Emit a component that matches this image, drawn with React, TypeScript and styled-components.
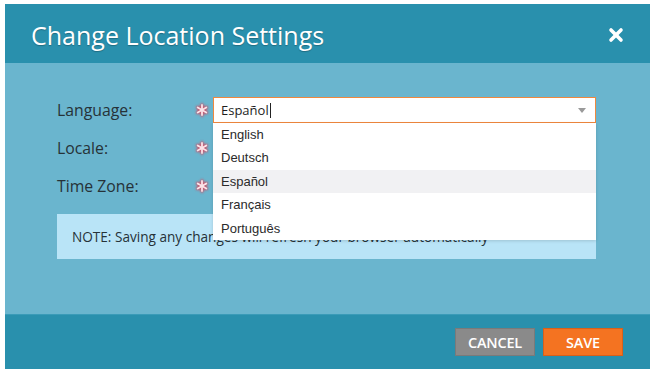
import React from "react";
import styled, { createGlobalStyle } from "styled-components";

const Global = createGlobalStyle`
  html, body { margin: 0; padding: 0; background: #ffffff; }
  body { font-family: "Open Sans", "Liberation Sans", sans-serif; }
  * { box-sizing: border-box; }
`;

const Dialog = styled.div`
  margin: 4px 0 0 5px;
  width: 645px;
  height: 365px;
  display: flex;
  flex-direction: column;
  background: #6ab5ce;
`;

const Header = styled.div`
  height: 59px;
  flex: none;
  background: #2990ad;
  display: flex;
  align-items: center;
  justify-content: space-between;
  padding: 3px 26px 0 26px;
`;

const Title = styled.h1`
  margin: 0;
  font-family: "Open Sans", sans-serif;
  font-weight: 400;
  font-size: 25px;
  color: #ffffff;
  text-shadow: 0 1px 1px rgba(0, 0, 0, 0.25);
`;

const CloseButton = styled.button`
  border: 0;
  background: none;
  padding: 0;
  width: 16px;
  height: 16px;
  display: flex;
  cursor: pointer;
`;

const Body = styled.div`
  flex: 1;
  padding: 28px 53px 0 52px;
  display: flex;
  flex-direction: column;
`;

const Form = styled.div`
  display: grid;
  grid-template-columns: 137px 19px 383px;
  grid-auto-rows: 38px;
  align-items: center;
`;

const Label = styled.div`
  font-family: "Open Sans", sans-serif;
  font-size: 15.8px;
  color: #263238;
`;

const Required = styled.div`
  display: flex;
  align-items: center;
  justify-content: flex-start;
  padding-left: 1px;
`;

const FieldCell = styled.div`
  position: relative;
  height: 26px;
`;

const Select = styled.div`
  height: 26px;
  background: #ffffff;
  border: 1px solid #f0883e;
  display: flex;
  align-items: center;
  justify-content: space-between;
  padding: 0 9px 0 7px;
`;

const SelectValue = styled.span`
  font-family: "Open Sans", sans-serif;
  font-size: 13px;
  color: #1e1e1e;
  display: flex;
  align-items: center;
`;

const Caret = styled.span`
  display: inline-block;
  width: 1px;
  height: 15px;
  background: #222;
  margin-left: 1px;
`;

const Arrow = styled.span`
  width: 0;
  height: 0;
  border-left: 4.5px solid transparent;
  border-right: 4.5px solid transparent;
  border-top: 5px solid #9a9a9a;
`;

const Menu = styled.ul`
  position: absolute;
  left: 0;
  top: 26px;
  width: 383px;
  margin: 0;
  padding: 0;
  list-style: none;
  background: #ffffff;
  box-shadow: 0 1px 3px rgba(0, 0, 0, 0.15);
  z-index: 2;
`;

const MenuItem = styled.li<{ $active?: boolean }>`
  height: 23.4px;
  line-height: 23.4px;
  padding: 0 8px;
  font-family: "Liberation Sans", Arial, sans-serif;
  font-size: 13px;
  color: #2b2b2b;
  background: ${(p) => (p.$active ? "#f1f1f3" : "#ffffff")};
`;

const Note = styled.div`
  margin-top: 9px;
  width: 539px;
  height: 45px;
  background: #b9e4f7;
  display: flex;
  align-items: center;
  padding-left: 15px;
  font-family: "Open Sans", sans-serif;
  font-size: 13.6px;
  color: #263238;
`;

const Footer = styled.div`
  height: 55px;
  flex: none;
  background: #2990ad;
  border-top: 1px solid #3a9bb8;
  display: flex;
  justify-content: flex-end;
  align-items: flex-start;
  gap: 8px;
  padding: 13px 27px 0 0;
`;

const Button = styled.button<{ $primary?: boolean }>`
  width: 80px;
  height: 28px;
  border: 1px solid ${(p) => (p.$primary ? "#d8601a" : "#7a7a7a")};
  background: ${(p) => (p.$primary ? "#f47321" : "#8a8a8a")};
  color: #ffffff;
  font-family: "Open Sans", sans-serif;
  font-weight: 600;
  font-size: 14.5px;
  letter-spacing: -0.2px;
  padding: 0;
  cursor: pointer;
`;

const Asterisk = () => (
  <svg width="14" height="14" viewBox="0 0 14 14" style={{ overflow: "visible" }}>
    <defs>
      <filter id="glow" x="-50%" y="-50%" width="200%" height="200%">
        <feGaussianBlur stdDeviation="0.9" />
      </filter>
    </defs>
    <g stroke="#d9485f" strokeWidth="3.4" strokeLinecap="round" filter="url(#glow)" opacity="0.9">
      <line x1="7" y1="2" x2="7" y2="12" />
      <line x1="2.7" y1="4.5" x2="11.3" y2="9.5" />
      <line x1="2.7" y1="9.5" x2="11.3" y2="4.5" />
    </g>
    <g stroke="#fbe3e8" strokeWidth="1.8" strokeLinecap="round">
      <line x1="7" y1="2" x2="7" y2="12" />
      <line x1="2.7" y1="4.5" x2="11.3" y2="9.5" />
      <line x1="2.7" y1="9.5" x2="11.3" y2="4.5" />
    </g>
  </svg>
);

const CloseIcon = () => (
  <svg width="16" height="16" viewBox="0 0 16 16">
    <g stroke="#ffffff" strokeWidth="3.6" strokeLinecap="round">
      <line x1="3" y1="3" x2="13" y2="13" />
      <line x1="13" y1="3" x2="3" y2="13" />
    </g>
  </svg>
);

const languages = ["English", "Deutsch", "Español", "Français", "Português"];

export default function App() {
  return (
    <>
      <Global />
      <Dialog>
        <Header>
          <Title>Change Location Settings</Title>
          <CloseButton aria-label="Close">
            <CloseIcon />
          </CloseButton>
        </Header>
        <Body>
          <Form>
            <Label>Language:</Label>
            <Required>
              <Asterisk />
            </Required>
            <FieldCell>
              <Select>
                <SelectValue>
                  Español
                  <Caret />
                </SelectValue>
                <Arrow />
              </Select>
              <Menu>
                {languages.map((l) => (
                  <MenuItem key={l} $active={l === "Español"}>
                    {l}
                  </MenuItem>
                ))}
              </Menu>
            </FieldCell>
            <Label>Locale:</Label>
            <Required>
              <Asterisk />
            </Required>
            <FieldCell />
            <Label>Time Zone:</Label>
            <Required>
              <Asterisk />
            </Required>
            <FieldCell />
          </Form>
          <Note>NOTE: Saving any changes will refresh your browser automatically</Note>
        </Body>
        <Footer>
          <Button>CANCEL</Button>
          <Button $primary>SAVE</Button>
        </Footer>
      </Dialog>
    </>
  );
}
